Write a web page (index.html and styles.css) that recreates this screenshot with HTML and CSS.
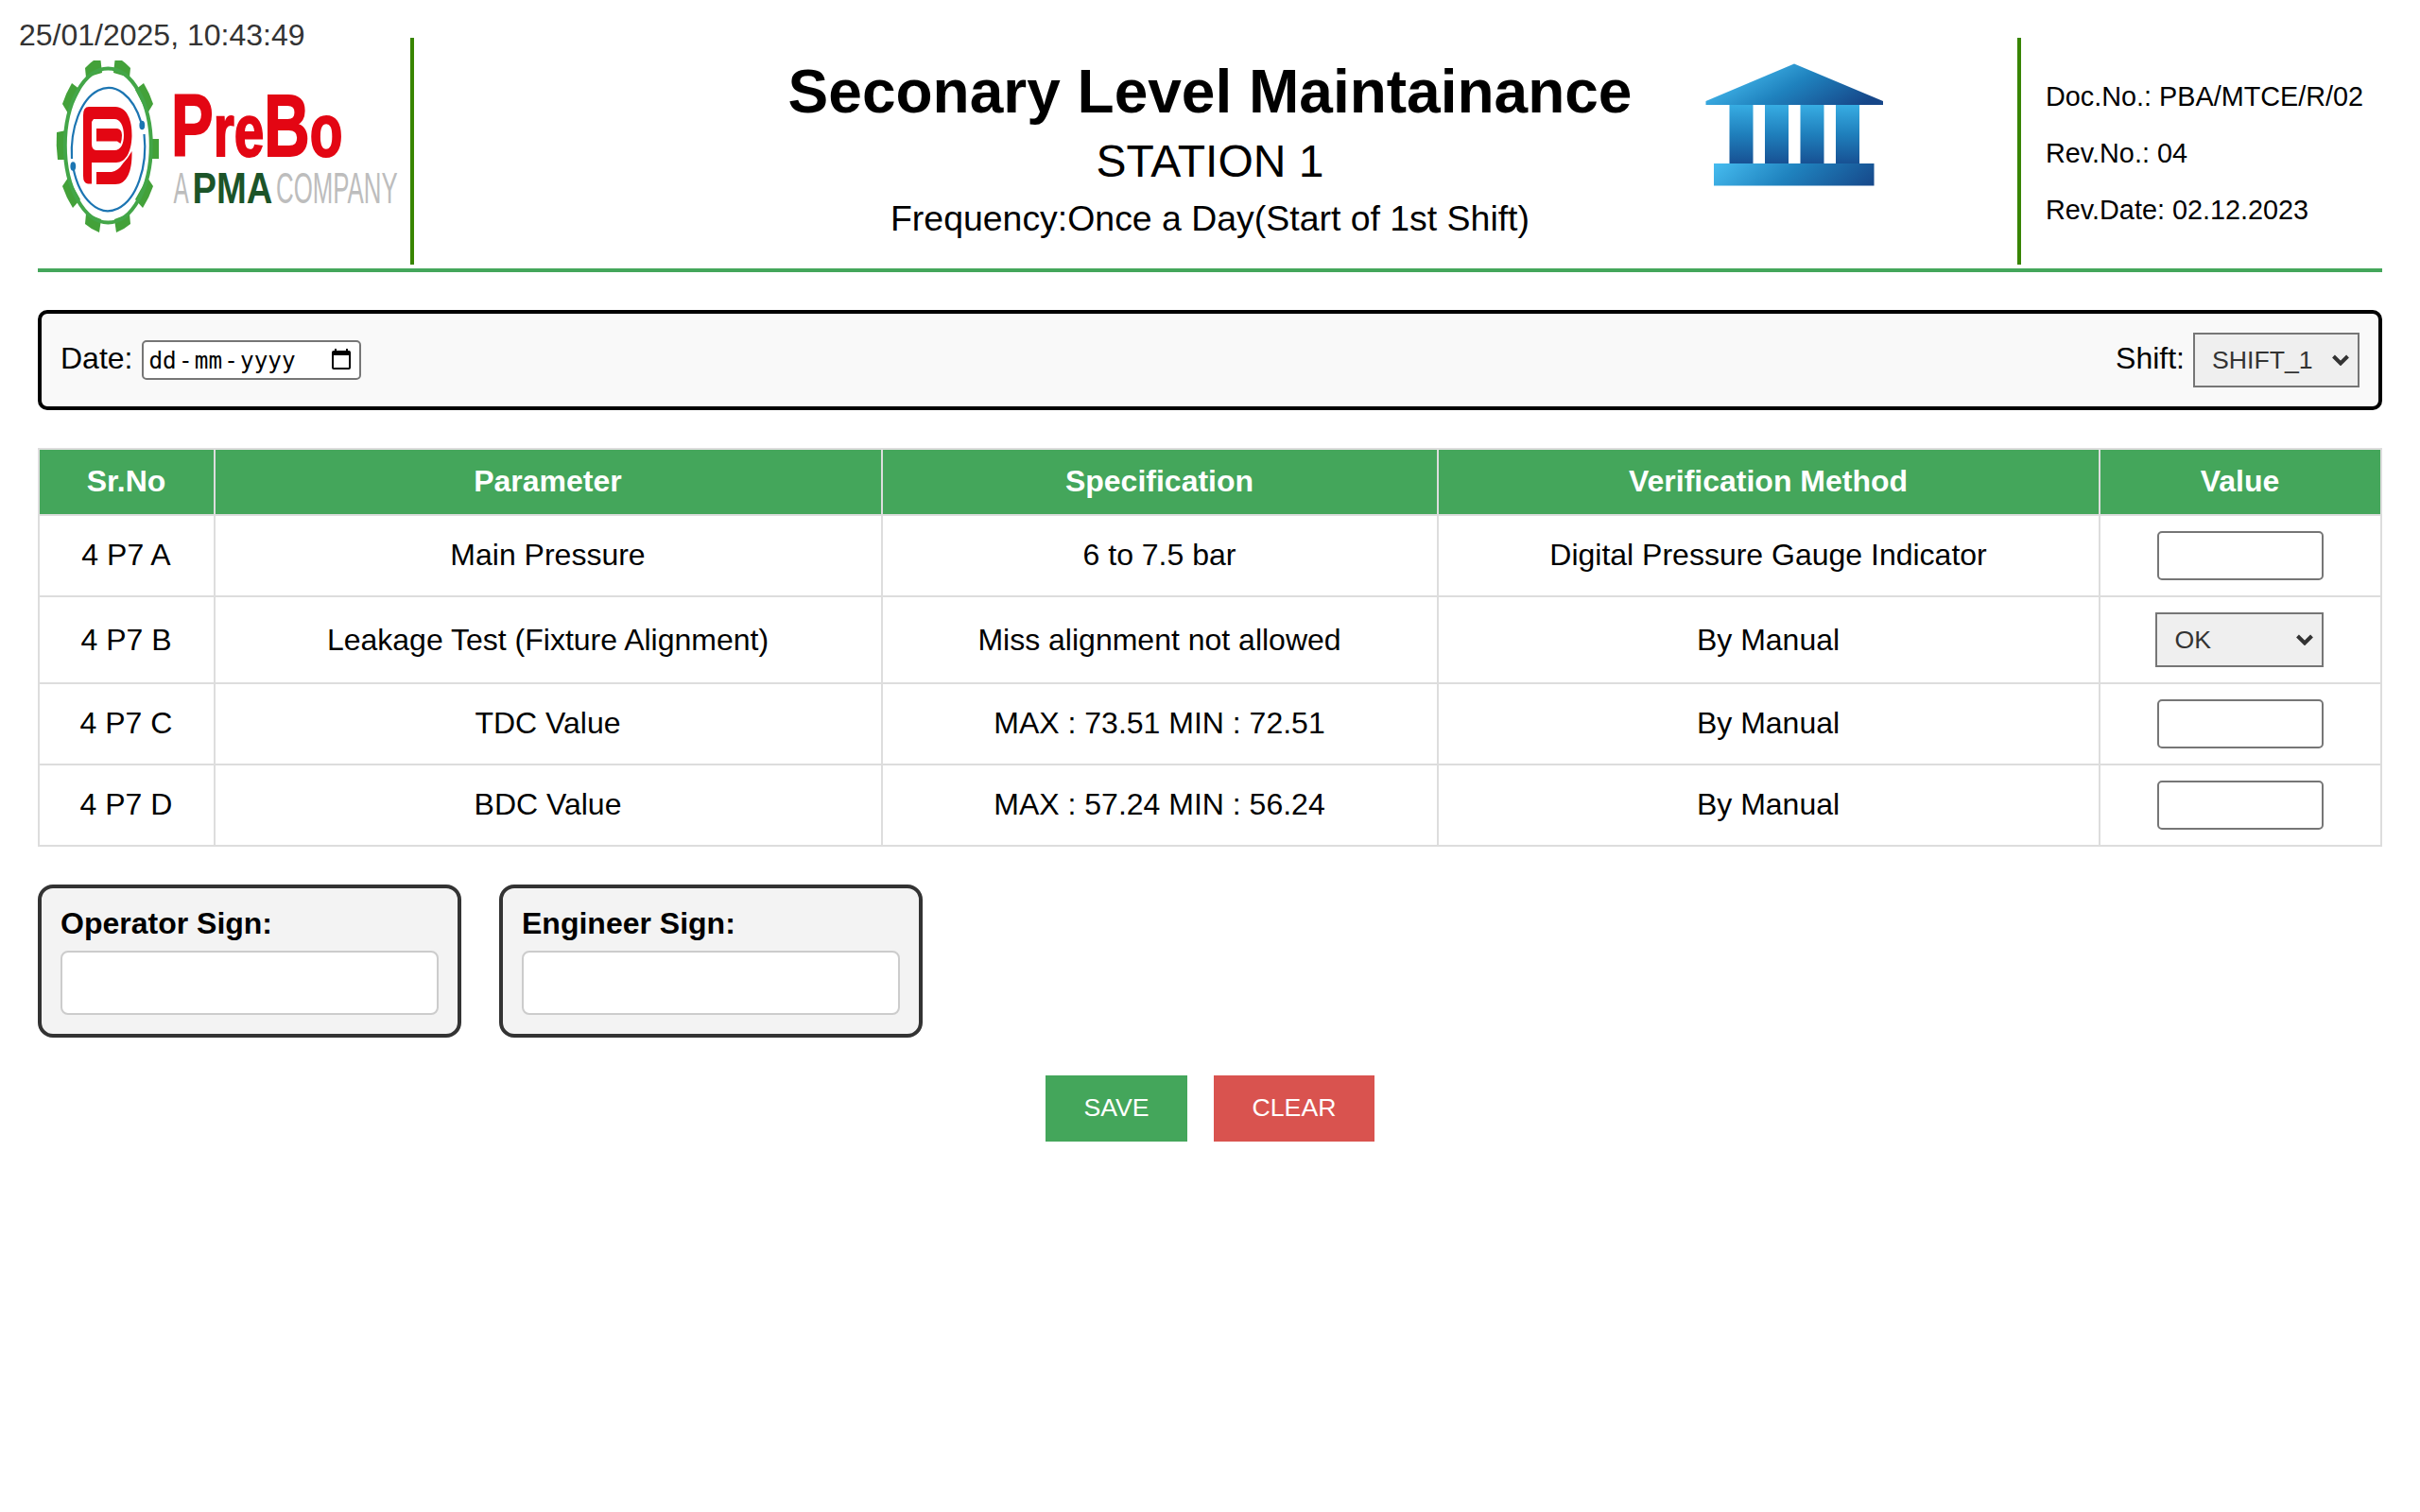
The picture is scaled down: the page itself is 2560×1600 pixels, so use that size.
FILE: index.html
```html
<!DOCTYPE html>
<html lang="en">
<head>
<meta charset="utf-8">
<title>Seconary Level Maintainance</title>
<link rel="stylesheet" href="styles.css">
</head>
<body>
<div class="timestamp">25/01/2025, 10:43:49</div>
<header class="header">
  <div class="brand">
    <svg class="logo" width="394" height="240" viewBox="40 40 394 240" role="img" aria-label="PreBo">
      <g fill="#43a139">
        <path d="M90 72 Q97 65 99 64 H106.500 L108 77 L91 82Z"/>
        <path d="M138 72 Q131 65 129 64 H121.500 L120 77 L137 82Z"/>
        <path d="M66 110 Q70 98 76 88 L85 95 L72 120Z"/>
        <path d="M162 110 Q158 98 152 88 L143 95 L156 120Z"/>
        <path d="M60 140 L65 139 L70 138 V169 H61 Q59 154 60 140Z"/>
        <path d="M159 147 H168 V168 H159Z"/>
        <path d="M66 197 Q70 209 77 220 L85 211 L72 188Z"/>
        <path d="M162 197 Q158 209 151 220 L143 211 L156 188Z"/>
        <path d="M90 237 Q97 243 105 246 L107 232 L91 226Z"/>
        <path d="M138 237 Q131 243 123 246 L121 232 L137 226Z"/>
      </g>
      <ellipse cx="114.300" cy="154" rx="45.500" ry="81.500" fill="none" stroke="#43a648" stroke-width="4"/>
      <g fill="none" stroke="#1c75b2" stroke-width="2.200">
        <path d="M76 168 A39 68 0 0 1 149.500 130"/>
        <path d="M152.500 142 A39 68 0 0 1 77.500 178"/>
      </g>
      <ellipse cx="150.300" cy="132.500" rx="2.900" ry="4.800" fill="#1c75b2"/>
      <ellipse cx="77.300" cy="176" rx="2.900" ry="4.800" fill="#1c75b2"/>
      <g fill="#e30613">
        <path fill-rule="evenodd" d="M88 122 Q88 113 94 113 H122 C134 113 140 127 139.500 144 C139 161 133 172 123 172 H97 V194.500 H93 Q88 194 88 186Z M97 129 V152 Q97 159 102 159 H121 C128 159 131 152 131 143 C131 133 127 126 121 126 H99Z"/>
        <path d="M102 136 H124 Q129 137 129 143 Q129 148 127.500 152 L124 149.500 H102Z"/>
        <path d="M139.500 160 C140 182 134 195 122 195 H102 V182 H118 Q125 181 130 173 Q135 168 139.500 160Z"/>
      </g>
      <text class="logo-name" transform="translate(181 165) scale(.728 1)">P<tspan class="logo-small">re</tspan>B<tspan class="logo-small">o</tspan></text>
      <text class="logo-grey" transform="translate(183.500 215) scale(.530 1)">A</text>
      <text class="logo-pma" transform="translate(203.500 215) scale(.830 1)">PMA</text>
      <text class="logo-grey" transform="translate(292 215) scale(.562 1)">COMPANY</text>
    </svg>
  </div>
  <div class="heading">
    <h1 class="title">Seconary Level Maintainance</h1>
    <div class="station">STATION 1</div>
    <div class="frequency">Frequency:Once a Day(Start of 1st Shift)</div>
  </div>
  <div class="home">
    <svg class="home-icon" width="200" height="140" viewBox="1800 60 200 140">
      <defs>
        <linearGradient id="roof" x1="0" y1="0.300" x2="1" y2="0.700"><stop offset="0" stop-color="#4cc5f7"/><stop offset="0.500" stop-color="#1f82be"/><stop offset="1" stop-color="#164688"/></linearGradient>
        <linearGradient id="pillar" x1="0" y1="0" x2="0" y2="1"><stop offset="0" stop-color="#38aee4"/><stop offset="0.500" stop-color="#1f7fbc"/><stop offset="1" stop-color="#174f92"/></linearGradient>
        <linearGradient id="base" gradientUnits="userSpaceOnUse" x1="1850" y1="130" x2="1940" y2="235"><stop offset="0" stop-color="#4cc5f7"/><stop offset="0.500" stop-color="#1f82be"/><stop offset="1" stop-color="#164688"/></linearGradient>
      </defs>
      <path fill="url(#pillar)" d="M1829.500 110h25v64h-25zM1867 110h25v64h-25zM1904.500 110h25v64h-25zM1942 110h25v64h-25z"/>
      <path fill="url(#roof)" d="M1898 67.500 L1992 107 V111 H1804.500 V107Z"/>
      <path fill="url(#base)" d="M1813 173h169.500v23.500h-169.500z"/>
    </svg>
  </div>
  <div class="doc">
    <div>Doc.No.: PBA/MTCE/R/02</div>
    <div>Rev.No.: 04</div>
    <div>Rev.Date: 02.12.2023</div>
  </div>
</header>
<section class="filters">
  <div class="field">
    <span>Date:</span>
    <div class="date"><span>dd</span><span class="dash">-</span><span>mm</span><span class="dash">-</span><span>yyyy</span>
      <svg class="calendar" width="20" height="22" viewBox="0 0 20 22"><path fill-rule="evenodd" d="M3 0h2v2h10V0h2v2h1q2 0 2 2v16q0 2-2 2H2q-2 0-2-2V4q0-2 2-2h1zM2 7v13h16V7z"/></svg>
    </div>
  </div>
  <div class="field shift-field">
    <span>Shift:</span>
    <div class="select shift"><span>SHIFT_1</span><svg class="chevron" width="18" height="12" viewBox="0 0 18 12"><path d="M1.500 2 L9 9.500 L16.500 2"/></svg></div>
  </div>
</section>
<table class="checks">
  <colgroup><col class="c1"><col class="c2"><col class="c3"><col class="c4"><col class="c5"></colgroup>
  <tr class="head"><th>Sr.No</th><th>Parameter</th><th>Specification</th><th>Verification Method</th><th>Value</th></tr>
  <tr class="row"><td>4 P7 A</td><td>Main Pressure</td><td>6 to 7.5 bar</td><td>Digital Pressure Gauge Indicator</td><td class="entry"><input class="value" type="text"></td></tr>
  <tr class="row tall"><td>4 P7 B</td><td>Leakage Test (Fixture Alignment)</td><td>Miss alignment not allowed</td><td>By Manual</td><td class="entry"><div class="select result"><span>OK</span><svg class="chevron" width="18" height="12" viewBox="0 0 18 12"><path d="M1.500 2 L9 9.500 L16.500 2"/></svg></div></td></tr>
  <tr class="row"><td>4 P7 C</td><td>TDC Value</td><td>MAX : 73.51 MIN : 72.51</td><td>By Manual</td><td class="entry"><input class="value" type="text"></td></tr>
  <tr class="row"><td>4 P7 D</td><td>BDC Value</td><td>MAX : 57.24 MIN : 56.24</td><td>By Manual</td><td class="entry"><input class="value" type="text"></td></tr>
</table>
<section class="signs">
  <label class="sign"><span>Operator Sign:</span><input class="sign-input" type="text"></label>
  <label class="sign"><span>Engineer Sign:</span><input class="sign-input" type="text"></label>
</section>
<div class="actions">
  <button class="btn save">SAVE</button>
  <button class="btn clear">CLEAR</button>
</div>
</body>
</html>
```
FILE: styles.css
```css
* { box-sizing: border-box; }
body {
  margin: 0;
  padding: 40px;
  background: #fff;
  color: #000;
  font-family: "Liberation Sans", Arial, sans-serif;
  font-size: 32px;
  line-height: 36px;
}
.timestamp { position: absolute; left: 20px; top: 19px; color: #333; }
.header {
  display: grid;
  grid-template-columns: 398px 1296px 400px 386px;
  height: 248px;
  padding-bottom: 4px;
  border-bottom: 4px solid #44a65b;
}
.brand { border-right: 4px solid #388500; height: 240px; }
.logo, .home-icon { display: block; }
.logo-name { font-size: 92px; font-weight: bold; fill: #e30613; stroke: #e30613; stroke-width: 2; }
.logo-small { font-size: 78px; }
.logo-grey { font-size: 46px; fill: #bdbdbd; }
.logo-pma { font-size: 46px; font-weight: bold; fill: #1c5429; }
.heading { text-align: center; padding: 20px 0 0 388px; white-space: nowrap; }
.heading > * { width: 908px; }
.title { margin: 0; font-size: 64px; line-height: 74px; }
.station { font-size: 48px; line-height: 56px; margin-top: 9px; }
.frequency { font-size: 37.440px; line-height: 42px; margin-top: 11px; }
.home { padding: 20px 0 0 66px; }
.doc {
  height: 240px;
  border-left: 4px solid #388500;
  padding: 46px 0 0 26px;
  font-size: 28.800px;
  line-height: 32px;
  display: flex;
  flex-direction: column;
  gap: 28px;
  white-space: nowrap;
}
.filters {
  display: flex;
  justify-content: space-between;
  align-items: center;
  margin-top: 40px;
  height: 106px;
  padding: 0 20px;
  border: 4px solid #000;
  border-radius: 10px;
  background: #f9f9f9;
}
.field { display: flex; align-items: center; gap: 10px; }
.shift-field { gap: 9px; }
.field > span { position: relative; top: -2px; }
.date {
  display: flex;
  align-items: center;
  width: 232px;
  height: 42px;
  padding: 2px 9px 0 5px;
  border: 2px solid #767676;
  border-radius: 5px;
  background: #fff;
  font-family: "DejaVu Sans Mono", monospace;
  font-size: 24.300px;
}
.dash { width: 19px; text-align: center; }
.calendar { margin: -4px 0 0 auto; }
.select {
  display: flex;
  align-items: center;
  justify-content: space-between;
  height: 58px;
  padding: 0 9px 0 18px;
  border: 2px solid #767676;
  background: #efefef;
  color: #333;
  font-size: 26.667px;
}
.shift { width: 176px; }
.chevron path { fill: none; stroke: #333; stroke-width: 4; }
.checks { width: 2480px; margin-top: 40px; border-collapse: collapse; table-layout: fixed; }
.c1 { width: 186px; }
.c2 { width: 706px; }
.c3 { width: 588px; }
.c4 { width: 700px; }
.c5 { width: 298px; }
.checks th, .checks td { border: 2px solid #ddd; padding: 0 1px 2px 0; text-align: center; }
.checks .tall td, .checks td.entry { padding-bottom: 0; }
.head { height: 70px; background: #44a65b; color: #fff; }
.row { height: 86px; }
.tall { height: 92px; }
.value { display: block; width: 176px; height: 52px; margin: 0 auto; border: 2px solid #767676; border-radius: 5px; }
.result { width: 178px; margin: 0 auto; padding-left: 19px; position: relative; left: -1px; }
.signs { display: flex; gap: 40px; margin-top: 40px; }
.sign { width: 448px; height: 162px; padding: 19px 20px; border: 4px solid #333; border-radius: 16px; background: #f3f3f3; font-weight: bold; }
.sign span { display: block; }
.sign-input { display: block; width: 400px; height: 68px; margin-top: 11px; border: 2px solid #ccc; border-radius: 8px; background: #fff; }
.actions { display: flex; justify-content: center; gap: 28px; margin-top: 40px; }
.btn { height: 70px; padding: 0 0 1px; border: 0; color: #fff; font: 26.667px "Liberation Sans", Arial, sans-serif; }
.save { width: 150px; background: #44a65b; }
.clear { width: 170px; background: #d9534f; }
```
